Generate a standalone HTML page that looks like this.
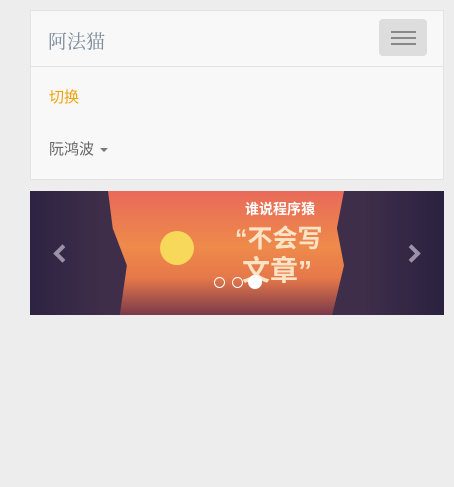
<!DOCTYPE html>
<html><head><meta charset="utf-8"><style>
body{margin:0;background:#ededed;width:454px;height:487px;overflow:hidden;font-family:"Liberation Sans","Noto Sans CJK SC",sans-serif}
.nav{position:absolute;left:30px;top:10px;width:412px;height:168px;background:#f8f8f8;border:1px solid #e3e3e3}
.brand{position:absolute;left:17px;top:16px;font-size:19px;color:#7a8a99;font-family:"Noto Serif CJK SC",serif}
.tog{position:absolute;left:348px;top:8px;width:48px;height:37px;background:#ddd;border-radius:4px}
.tog i{position:absolute;left:12px;width:25px;height:2px;background:#888}
.hr{position:absolute;left:0;top:55px;width:412px;height:1px;background:#e3e3e3}
.a{position:absolute;left:18px;top:75px;font-size:15px;color:#f0a30a}
.b{position:absolute;left:18px;top:127px;font-size:15px;color:#666}
.caret{display:inline-block;margin-left:6px;vertical-align:middle;border-left:4px solid transparent;border-right:4px solid transparent;border-top:4px solid #777}
.ban{position:absolute;left:30px;top:191px;width:414px;height:124px;overflow:hidden;background:linear-gradient(90deg,#2d2342 0%,#3f2e4a 18%,#3f2e4a 80%,#2a2240 100%)}
.c{position:absolute;left:78px;top:0;width:236px;height:124px;background:linear-gradient(180deg,#e86a5a 0%,#ee8a4a 45%,#e6784a 70%,#7a3a4a 100%);clip-path:polygon(0 0,100% 0,97% 30%,100% 60%,95% 100%,5% 100%,8% 60%,2% 30%)}
.sun{position:absolute;left:130px;top:40px;width:34px;height:34px;border-radius:50%;background:#f7d85a}
.t1{position:absolute;left:215px;top:8px;color:#fff;font-size:14px;font-weight:bold}
.t2{position:absolute;left:205px;top:28px;color:#fbe3c6;font-size:25px;font-weight:bold}
.t3{position:absolute;left:212px;top:58px;color:#fbe3c6;font-size:28px;font-weight:bold}
.arr{position:absolute;top:56px;width:9px;height:9px;border-top:4px solid #9a93a8;border-left:4px solid #9a93a8}
.d{position:absolute;top:86px;width:9px;height:9px;border:1px solid #fff;border-radius:50%}
</style></head><body>
<div class="nav">
<div class="brand">阿法猫</div>
<div class="tog"><i style="top:12px"></i><i style="top:18px"></i><i style="top:24px"></i></div>
<div class="hr"></div>
<div class="a">切换</div>
<div class="b">阮鸿波<span class="caret"></span></div>
</div>
<div class="ban">
<div class="c"></div>
<div class="sun"></div>
<div class="t1">谁说程序猿</div>
<div class="t2">“不会写</div>
<div class="t3">文章”</div>
<div class="arr" style="left:26px;transform:rotate(-45deg)"></div>
<div class="arr" style="left:375px;transform:rotate(135deg)"></div>
<div class="d" style="left:184px"></div>
<div class="d" style="left:202px"></div>
<div class="d" style="left:218px;width:12px;height:12px;top:84px;background:#fff"></div>
</div>
</body></html>
